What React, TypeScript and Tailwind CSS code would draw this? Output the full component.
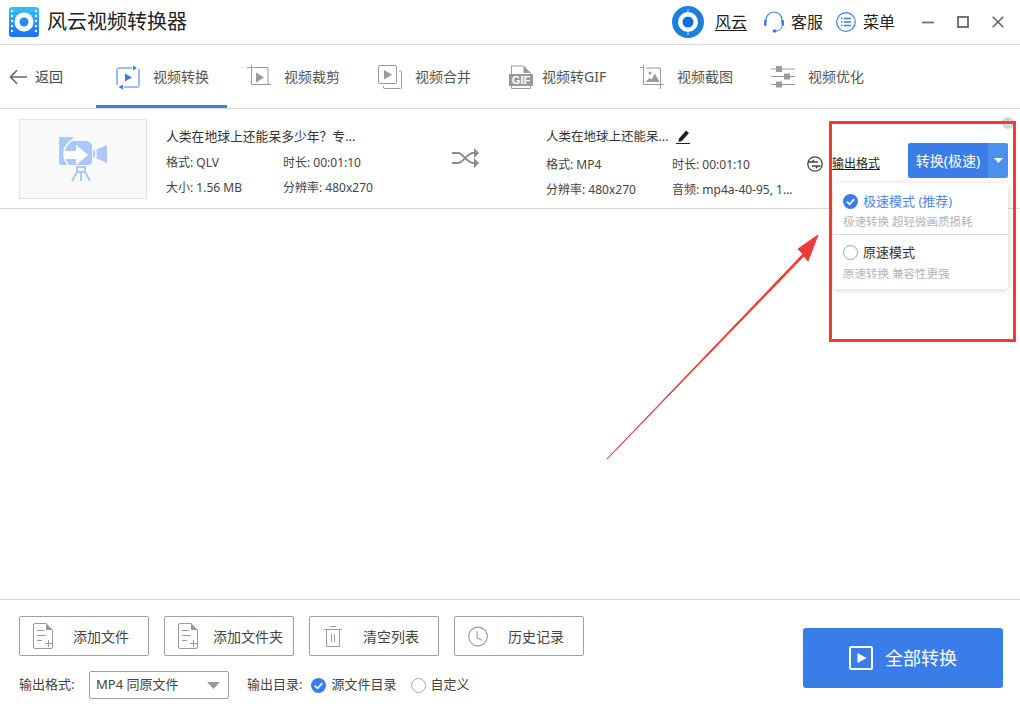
import React from "react";

const G = "#9a9a9a";

function IconConvert() {
  return (
    <svg width="24" height="26" viewBox="0 0 24 26" fill="none">
      <path d="M16 4H2.5A1.5 1.5 0 0 0 1 5.5V21M3 22" stroke="#3a7de9" strokeWidth="1" />
      <path d="M8 23h13.5a1.5 1.5 0 0 0 1.5-1.5V5" stroke="#3a7de9" strokeWidth="1" />
      <path d="M17 1.5 21 4l-4 2.5z" fill="#3a7de9" />
      <path d="M7 20.5 2.5 23 7 25.5z" fill="#3a7de9" />
      <path d="M9 9.5 16 13.5l-7 4z" fill="#3a7de9" />
    </svg>
  );
}
function IconCrop() {
  return (
    <svg width="24" height="24" viewBox="0 0 24 24" fill="none" stroke={G}>
      <path d="M0 2.5h21V20M4.500 0v19.500H24" strokeWidth="1" />
      <path d="M9 7.500l8 5-8 5z" fill={G} stroke="none" />
    </svg>
  );
}
function IconMerge() {
  return (
    <svg width="24" height="24" viewBox="0 0 24 24" fill="none" stroke={G}>
      <rect x="0.500" y="0.500" width="18" height="18" rx="1.500" />
      <path d="M21 6h1.500a1 1 0 0 1 1 1v15.500a1 1 0 0 1-1 1H6.500a1 1 0 0 1-1-1V21" />
      <path d="M6 5l8 4.800-8 4.800z" fill={G} stroke="none" />
    </svg>
  );
}
function IconGif() {
  return (
    <svg width="24" height="24" viewBox="0 0 24 24" fill="none">
      <path d="M2.500 9V1h12l7 7v2M2.500 21v2.500h19V21" stroke={G} />
      <path d="M14.500 1v7h7z" fill={G} />
      <rect x="0" y="9" width="24" height="12" fill={G} />
      <text x="12" y="19" textAnchor="middle" fontSize="11" fontWeight="700" fontFamily="'Liberation Sans', sans-serif" fill="#fff">GIF</text>
    </svg>
  );
}
function IconShot() {
  return (
    <svg width="24" height="24" viewBox="0 0 24 24" fill="none" stroke={G}>
      <path d="M0 2.500h3.500M3.500 0v19.500H24M20.500 24v-4.500M6 3h14.500v16" />
      <circle cx="10" cy="8" r="1.500" fill={G} stroke="none" />
      <path d="M5.500 17l4-4 2 1.500 3.500-6 4.500 8.500z" fill={G} stroke="none" />
    </svg>
  );
}
function IconTune() {
  return (
    <svg width="24" height="22" viewBox="0 0 24 22" fill="none" stroke={G}>
      <path d="M0 3h24M0 10.500h24M0 18.500h24" />
      <rect x="5" y="0" width="6" height="6" fill={G} stroke="none" />
      <rect x="13" y="7.500" width="6" height="6" fill={G} stroke="none" />
      <rect x="5" y="15.500" width="6" height="6" fill={G} stroke="none" />
    </svg>
  );
}
function IconFile() {
  return (
    <svg width="20" height="26" viewBox="0 0 20 26" fill="none" stroke={G}>
      <path d="M13 .5H2A1.500 1.500 0 0 0 .5 2v22A1.500 1.500 0 0 0 2 25.500h16a1.500 1.500 0 0 0 1.500-1.500V7" />
      <path d="M13 0v7h7z" fill={G} stroke="none" />
      <path d="M4 7.500h7M4 12.500h9M4 17.500h5M12 20.500h7M15.500 17v7" />
    </svg>
  );
}
function IconTrash() {
  return (
    <svg width="18" height="21" viewBox="0 0 18 21" fill="none" stroke={G}>
      <path d="M0 3.500h18M6 .5h6M2.500 3.500v17h13v-17M7.500 8v8M10.500 8v8" />
    </svg>
  );
}
function IconClock() {
  return (
    <svg width="21" height="21" viewBox="0 0 21 21" fill="none" stroke={G}>
      <circle cx="10.500" cy="10.500" r="9.800" strokeWidth="1.200" />
      <path d="M9.500 5v7l5 2.500" strokeWidth="1.200" />
    </svg>
  );
}
function Check({ size }: { size: number }) {
  return (
    <svg width={size} height={size} viewBox="0 0 16 16">
      <circle cx="8" cy="8" r="8" fill="#3a7de9" />
      <path d="M4 8.200 7 11l5-5.500" fill="none" stroke="#fff" strokeWidth="1.800" />
    </svg>
  );
}

const tabs = [
  { label: "视频转换", icon: <IconConvert />, active: true },
  { label: "视频裁剪", icon: <IconCrop /> },
  { label: "视频合并", icon: <IconMerge /> },
  { label: "视频转GIF", icon: <IconGif />, tight: true },
  { label: "视频截图", icon: <IconShot /> },
  { label: "视频优化", icon: <IconTune /> },
];

const buttons = [
  { label: "添加文件", icon: <IconFile />, pl: "pl-[13px]", gap: "gap-[20px]" },
  { label: "添加文件夹", icon: <IconFile />, pl: "pl-[13px]", gap: "gap-[15px]" },
  { label: "清空列表", icon: <IconTrash />, pl: "pl-[13px]", gap: "gap-[20px]" },
  { label: "历史记录", icon: <IconClock />, pl: "pl-[13px]", gap: "gap-[20px]" },
];

export default function App() {
  return (
    <div className="relative w-[1020px] h-[711px] overflow-hidden bg-white flex flex-col text-[#333] font-['Noto_Sans','Noto_Sans_CJK_SC',sans-serif]">
      {/* Title bar */}
      <header className="h-[45px] shrink-0 border-b border-[#d9d9d9] flex items-center pl-[9px] pr-[16px]">
        <svg width="30" height="30" viewBox="0 0 30 30" className="mb-[1px]">
          <defs>
            <linearGradient id="lg" x1="0" y1="0" x2="0" y2="1">
              <stop offset="0" stopColor="#35c3f5" />
              <stop offset="1" stopColor="#1f6ff0" />
            </linearGradient>
          </defs>
          <rect width="30" height="30" rx="3" fill="url(#lg)" />
          <path d="M3 3v24M27 3v24" stroke="#fff" strokeWidth="2" strokeDasharray="2 3" />
          <circle cx="15" cy="15" r="9.500" fill="#fff" />
          <circle cx="15" cy="15" r="4.500" fill="#2b8bf2" />
        </svg>
        <span className="ml-[8px] text-[20px] leading-none text-[#222]">风云视频转换器</span>
        <div className="ml-auto flex items-center">
          <svg width="32" height="32" viewBox="0 0 32 32">
            <circle cx="16" cy="16" r="13" fill="none" stroke="#1c7fd8" strokeWidth="6" />
            <circle cx="16" cy="16" r="5.500" fill="#0a6fdc" />
            <path d="M16 3v8M16 21v8" stroke="#cfe4f8" strokeWidth="1" />
          </svg>
          <span className="ml-[11px] text-[16px] underline underline-offset-2 text-[#222]">风云</span>
          <svg width="20" height="22" viewBox="0 0 20 22" fill="none" className="ml-[17px]">
            <path d="M2 11V9a8 8 0 0 1 16 0v2" stroke="#3a7de9" strokeWidth="1.200" />
            <rect x="0" y="9" width="2.500" height="6" rx="1.200" fill="#3a7de9" />
            <rect x="17.500" y="9" width="2.500" height="6" rx="1.200" fill="#3a7de9" />
            <path d="M18 15c0 3-3 5-6 5" stroke="#3a7de9" strokeWidth="1" />
            <circle cx="10.500" cy="20" r="1.800" fill="#3a7de9" />
          </svg>
          <span className="ml-[7px] text-[16px] text-[#222]">客服</span>
          <svg width="20" height="20" viewBox="0 0 20 20" fill="none" className="ml-[13px]">
            <circle cx="10" cy="10" r="9.300" stroke="#3a7de9" strokeWidth="1.200" />
            <path d="M8 6.500h7M8 10h7M8 13.500h7M5 6.500h1.500M5 10h1.500M5 13.500h1.500" stroke="#3a7de9" strokeWidth="1.400" />
          </svg>
          <span className="ml-[7px] text-[16px] text-[#222]">菜单</span>
          <svg width="12" height="12" viewBox="0 0 12 12" className="ml-[27px]">
            <path d="M0 6.500h12" stroke="#666" strokeWidth="1.600" />
          </svg>
          <svg width="12" height="12" viewBox="0 0 12 12" fill="none" className="ml-[23px]">
            <rect x="1" y="1" width="10" height="10" stroke="#666" strokeWidth="1.800" />
          </svg>
          <svg width="12" height="12" viewBox="0 0 12 12" className="ml-[23px]">
            <path d="M.7.700l10.600 10.600M11.300.700.700 11.300" stroke="#666" strokeWidth="1.600" />
          </svg>
        </div>
      </header>

      {/* Tabs */}
      <nav className="h-[64px] shrink-0 border-b border-[#d9d9d9] flex items-stretch">
        <div className="w-[96px] flex items-center pl-[9px] text-[14px] text-[#444]">
          <svg width="18" height="16" viewBox="0 0 18 16" fill="none">
            <path d="M18 8H1.500M8 1.200 1.500 8 8 14.800" stroke="#666" strokeWidth="1.600" />
          </svg>
          <span className="ml-[8px]">返回</span>
        </div>
        {tabs.map((t) => (
          <div
            key={t.label}
            className={`w-[131px] flex items-center text-[14px] text-[#555] border-b-[3px] pt-[3px] ${
              t.active ? "border-[#3a7de9]" : "border-transparent"
            } pl-[20px] ${t.tight ? "gap-[9px]" : "gap-[13px]"}`}
          >
            {t.icon}
            <span className="whitespace-nowrap">{t.label}</span>
          </div>
        ))}
      </nav>

      {/* File row */}
      <section className="h-[100px] shrink-0 border-b border-[#d9d9d9] flex items-start pl-[19px] text-[#444]">
        <div className="mt-[10px] w-[128px] h-[80px] border border-[#e2e2e2] bg-[#f9f9f9] flex items-center justify-center">
          <svg width="50" height="46" viewBox="0 0 50 46">
            <rect x="1" y="1" width="14" height="4" rx="1" fill="#abc9f6" />
            <path d="M1 5h30a3 3 0 0 1 3 3v18a3 3 0 0 1-3 3H4a3 3 0 0 1-3-3z" fill="#abc9f6" />
            <path d="M35 15 49 9v18l-14-6z" fill="#abc9f6" />
            <circle cx="22" cy="18" r="16" fill="none" stroke="#fff" strokeWidth="1.500" />
            <path d="M7 15h11V9l12 10-12 10v-6H7z" fill="#fff" />
            <path d="M19 31h8v5h-8zM19 36l-5 9M27 36l5 9M23 36v9" stroke="#abc9f6" strokeWidth="2" fill="none" />
          </svg>
        </div>

        <div className="ml-[19px] w-[230px] flex flex-col">
          <div className="mt-[17px] h-[20px] leading-[20px] text-[12.8px] whitespace-nowrap text-[#333]">
            人类在地球上还能呆多少年？专...
          </div>
          <div className="mt-[4px] grid grid-cols-[117px_1fr] text-[12px] leading-[25px] whitespace-nowrap">
            <span>格式: QLV</span>
            <span>时长: 00:01:10</span>
            <span>大小: 1.56 MB</span>
            <span>分辨率: 480x270</span>
          </div>
        </div>

        <svg width="28" height="20" viewBox="0 0 28 20" fill="none" className="mt-[39px] ml-[56px]" stroke="#8a8a8a" strokeWidth="2">
          <path d="M0 5h6c5 0 9 10 15 10h3M0 15h6c5 0 9-10 15-10h3" />
          <path d="M22 0l5 5-5 5zM22 10l5 5-5 5z" fill="#8a8a8a" stroke="none" />
        </svg>

        <div className="ml-[66px] w-[260px] flex flex-col">
          <div className="mt-[18px] h-[20px] flex items-center text-[12.5px] whitespace-nowrap text-[#333]">
            人类在地球上还能呆...
            <svg width="14" height="15" viewBox="0 0 14 15" className="ml-[7px] mb-[2px]">
              <path d="M3 9.500 10 1.500l3 2.500-7 8-3.500 1z" fill="#222" />
              <path d="M0 14.500h14" stroke="#222" strokeWidth="1" />
            </svg>
          </div>
          <div className="mt-[5px] grid grid-cols-[126px_1fr] text-[12px] leading-[25px] whitespace-nowrap">
            <span>格式: MP4</span>
            <span>时长: 00:01:10</span>
            <span>分辨率: 480x270</span>
            <span>音频: mp4a-40-95, 1...</span>
          </div>
        </div>

        <div className="flex items-center absolute left-[807px] top-[155px]">
          <svg width="16" height="16" viewBox="0 0 16 16" fill="none" stroke="#444" strokeWidth="1.300">
            <circle cx="8" cy="8" r="7.200" />
            <path d="M1.500 6h9.500M13.500 10H5M5 6 7 4M11 10l-2 2" />
          </svg>
          <span className="ml-[9px] text-[12px] underline text-[#222]">输出格式</span>
        </div>
      </section>

      {/* Empty list */}
      <main className="flex-1" />

      {/* Footer */}
      <footer className="h-[112px] shrink-0 border-t border-[#d9d9d9] flex pl-[19px] pr-[17px] pt-[16px]">
        <div className="flex flex-col">
          <div className="flex gap-[15px]">
            {buttons.map((b) => (
              <div
                key={b.label}
                className={`w-[130px] h-[40px] border border-[#a0a0a0] rounded-[2px] flex items-center ${b.pl} ${b.gap} text-[13.500px] text-[#444] whitespace-nowrap`}
              >
                <span className="w-[20px] flex justify-center shrink-0">{b.icon}</span>
                <span className={b.label.length === 4 ? "ml-[0px] text-[14px]" : "text-[14px]"}>{b.label}</span>
              </div>
            ))}
          </div>
          <div className="mt-[15px] flex items-center text-[13px] text-[#444] whitespace-nowrap">
            <span className="w-[70px]">输出格式:</span>
            <div className="w-[140px] h-[28px] border border-[#a0a0a0] rounded-[2px] flex items-center pl-[6px] pr-[8px] justify-between text-[#444]">
              <span>MP4 同原文件</span>
              <svg width="13" height="7" viewBox="0 0 13 7">
                <path d="M0 0h13L6.500 7z" fill="#9a9a9a" />
              </svg>
            </div>
            <span className="ml-[18px]">输出目录:</span>
            <span className="ml-[9px] flex"><Check size={15} /></span>
            <span className="ml-[5px]">源文件目录</span>
            <span className="ml-[14px] w-[15px] h-[15px] rounded-full border border-[#a5a5a5]" />
            <span className="ml-[5px]">自定义</span>
          </div>
        </div>
        <div className="ml-auto mt-[12px] w-[200px] h-[60px] rounded-[3px] bg-[#3a7de9] flex items-center justify-center gap-[12px] text-white text-[18px]">
          <svg width="24" height="24" viewBox="0 0 24 24" fill="none">
            <rect x="1" y="1" width="22" height="22" rx="1.500" stroke="#fff" strokeWidth="2" />
            <path d="M8.500 7l9 5-9 5z" fill="#fff" />
          </svg>
          <span>全部转换</span>
        </div>
      </footer>

      {/* Convert button (over row) */}
      <div className="absolute left-[908px] top-[143px] w-[100px] h-[35px] flex text-white text-[14px] rounded-[2px] overflow-hidden">
        <div className="w-[80px] bg-[#3a7de9] flex items-center justify-center whitespace-nowrap">转换(极速)</div>
        <div className="w-[20px] bg-[#4a90ec] flex items-center justify-center">
          <svg width="9" height="5" viewBox="0 0 9 5"><path d="M0 0h9L4.500 5z" fill="#fff" /></svg>
        </div>
      </div>

      {/* Row close */}
      <div className="absolute left-[1002px] top-[117px] w-[12px] h-[12px] rounded-full bg-[#d4d4d4] flex items-center justify-center">
        <svg width="6" height="6" viewBox="0 0 6 6"><path d="M.5.500l5 5M5.500.500l-5 5" stroke="#fff" strokeWidth="1" /></svg>
      </div>

      {/* Dropdown menu */}
      <div className="absolute left-[833px] top-[183px] w-[175px] h-[106px] bg-white rounded-[4px] shadow-[0_1px_6px_rgba(0,0,0,0.18)] flex flex-col">
        <div className="h-[52px] border-b border-[#d9d9d9] pl-[10px] pt-[9px]">
          <div className="flex items-center gap-[5px] h-[19px]">
            <Check size={15} />
            <span className="text-[13px] text-[#4f86ee] whitespace-nowrap">极速模式 (推荐)</span>
          </div>
          <div className="mt-[2px] text-[11.500px] leading-[18px] text-[#b5b5b5] whitespace-nowrap">极速转换 超轻微画质损耗</div>
        </div>
        <div className="pl-[10px] pt-[8px]">
          <div className="flex items-center gap-[5px] h-[19px]">
            <span className="w-[15px] h-[15px] rounded-full border border-[#a5a5a5]" />
            <span className="text-[13px] text-[#333] whitespace-nowrap">原速模式</span>
          </div>
          <div className="mt-[3px] text-[11.500px] leading-[18px] text-[#b5b5b5] whitespace-nowrap">原速转换 兼容性更强</div>
        </div>
      </div>

      {/* Red annotation */}
      <div className="absolute left-[829px] top-[121px] w-[187px] h-[221px] border-[3px] border-[#f23a3a] pointer-events-none" />
      <svg className="absolute left-[600px] top-[225px] pointer-events-none" width="225" height="240" viewBox="0 0 225 240">
        <path d="M7 234 L203 29 L198 24 L218 10 L208 36 L204 31 Z" fill="#f23a3a" stroke="#f23a3a" strokeWidth="1" strokeLinejoin="round" />
      </svg>
    </div>
  );
}
